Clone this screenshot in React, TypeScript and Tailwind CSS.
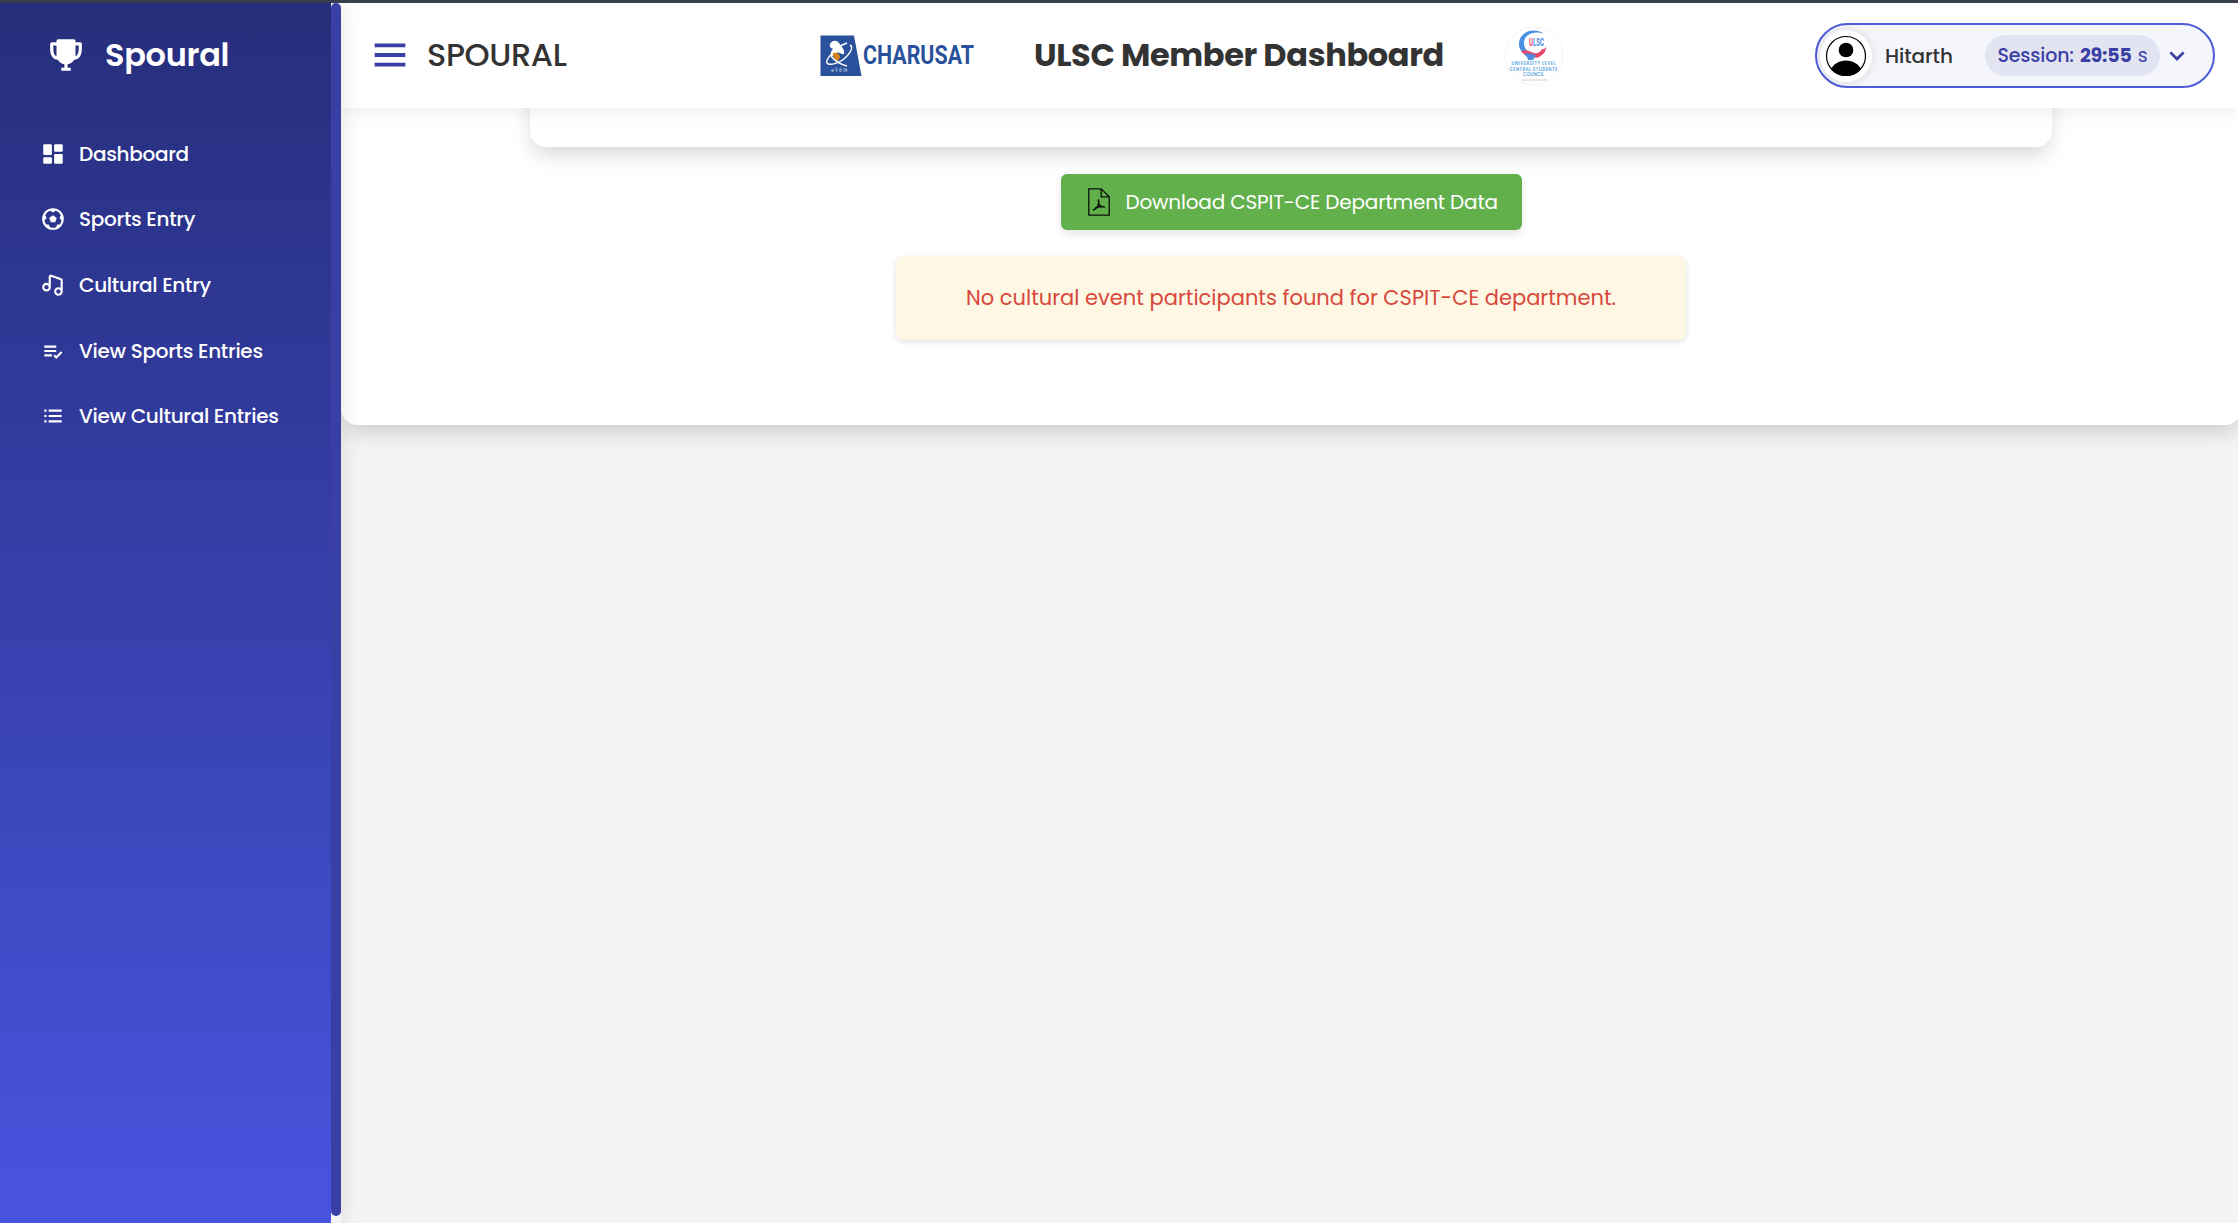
import type { ComponentType } from 'react';
import {
  BiChevronDown,
  BiFootball,
  BiListCheck,
  BiListUl,
  BiMenu,
  BiMusic,
  BiSolidDashboard,
  BiSolidTrophy,
} from 'react-icons/bi';

type NavItem = { label: string; Icon: ComponentType<{ className?: string }> };

const navItems: NavItem[] = [
  { label: 'Dashboard', Icon: BiSolidDashboard },
  { label: 'Sports Entry', Icon: BiFootball },
  { label: 'Cultural Entry', Icon: BiMusic },
  { label: 'View Sports Entries', Icon: BiListCheck },
  { label: 'View Cultural Entries', Icon: BiListUl },
];

function CharusatLogo() {
  return (
    <svg className="block h-[42px] w-[160px] shrink-0" viewBox="0 0 160 42">
      <path d="M.5.5H34L41.5 41H.5z" fill="#2a529c" />
      <path d="M10 9c2-4 7-4 9-1 3 4 6 7 5 11-3 1-5-3-8-1-2 1-3 4-5 3-1-3 0-5 2-7-2-1-4-2-3-5z" fill="#fff" />
      <path d="M13 18c3-1 6 0 7 3 0 3-1 4-3 5-2-2-5-5-4-8z" fill="#d9821c" />
      <path
        d="M30 10c4 2 0 9-6 14-5 4-12 6-16 5-3-2 0-7 5-11M11 21c3 4 8 8 16 10M20 11l7-3"
        fill="none"
        stroke="#fff"
        strokeWidth="1.4"
      />
      <text x="11" y="37" fontFamily="Noto Sans" fontSize="4.5" fill="#dfe6f3" textLength="16">
        चरैवेति
      </text>
      <text
        x="43"
        y="29.3"
        fontFamily="Roboto"
        fontWeight="700"
        fontSize="25"
        fill="#2a529c"
        textLength="111"
        lengthAdjust="spacingAndGlyphs"
      >
        CHARUSAT
      </text>
    </svg>
  );
}

function UlscLogo() {
  return (
    <svg className="block h-[60px] w-[60px] shrink-0" viewBox="0 0 60 60">
      <circle cx="30" cy="30" r="29" fill="#fff" stroke="#f1f1f1" strokeWidth=".8" />
      <path d="M40 8C31 1 15 5 15 18c0 6 4 9 8 13l6 2 2-6c-6 0-11-3-11-10C20 8 31 4 40 8z" fill="#4a90e2" />
      <path d="M17 25c5-2 9 0 12 2 4 1 8-1 9-4 2 1 4-1 4-3 1 5-3 9-7 11-5 2-7-1-10-2-3 0-6-1-8-4z" fill="#e8476a" />
      <path d="M22 27l10 2-3 5h-5z" fill="#4a90e2" />
      <text x="25" y="19.5" fontFamily="Roboto" fontWeight="700" fontSize="11" textLength="15" lengthAdjust="spacingAndGlyphs">
        <tspan fill="#e8476a">U</tspan>
        <tspan fill="#4a90e2">LSC</tspan>
      </text>
      <g fontFamily="Poppins" fontWeight="600" fontSize="4.4" fill="#5fa6e0" textAnchor="middle">
        <text x="29.5" y="39" textLength="44">UNIVERSITY LEVEL</text>
        <text x="29.5" y="44.6" textLength="48">CENTRAL STUDENTS</text>
        <text x="29.5" y="50.3" textLength="21">COUNCIL</text>
      </g>
      <path d="M18 54h25" stroke="#c9b5bb" strokeWidth="1" strokeDasharray="2 .7" />
    </svg>
  );
}

function PdfIcon() {
  return (
    <svg className="block h-7 w-[22px] shrink-0" viewBox="0 0 22 28" fill="none" stroke="#0b0f0a" strokeWidth="1.3">
      <path d="M.8.8h12.400l8 8v18.400H.8zM13.200.8v8h8" />
      <path
        d="M10.400 12c.8 2.500.6 4.500-.8 6.500s-2.600 3-4.100 3.500M10.600 16c1 1.800 3 2.800 5.800 2.900M7.500 20c2.600-1.400 5-1.600 8.500-1.200"
        strokeWidth="1.500"
        strokeLinecap="round"
      />
    </svg>
  );
}

function Avatar() {
  return (
    <span className="flex size-[52px] shrink-0 items-center justify-center rounded-full bg-white shadow-[0_0_10px_rgba(0,0,0,0.12)]">
      <svg className="size-[42px]" viewBox="0 0 42 42">
        <clipPath id="avatar-clip">
          <circle cx="21" cy="21" r="20" />
        </clipPath>
        <circle cx="21" cy="21" r="19.5" fill="#fff" stroke="#000" strokeWidth="1.2" />
        <g clipPath="url(#avatar-clip)">
          <circle cx="21" cy="15" r="7.3" />
          <path d="M5 36c3-7 9-10.500 16-10.500S34 29 37 36v6H5z" />
        </g>
      </svg>
    </span>
  );
}

function Sidebar() {
  return (
    <aside className="relative z-20 flex w-[341px] shrink-0 bg-[#f4f4f4] shadow-[0_0_20px_rgba(0,0,0,0.12)]">
      <div className="flex w-[331px] flex-col bg-linear-to-b from-[#262e7b] to-[#4854e0] text-white">
        <div className="flex h-[105px] items-center gap-5 pb-0.5 pl-[47px]">
          <BiSolidTrophy className="size-[38px]" />
          <span className="text-[32px] leading-none font-semibold tracking-[-0.3px]">Spoural</span>
        </div>
        <nav className="mt-[13px] flex flex-col">
          {navItems.map(({ label, Icon }) => (
            <a key={label} className="flex h-[65.6px] items-center gap-[13px] pl-10">
              <Icon className="size-[26px]" />
              <span className="text-[20px] leading-none font-medium tracking-[-0.3px]">{label}</span>
            </a>
          ))}
        </nav>
      </div>
      <div className="mb-[7px] w-[10px] rounded-full bg-[#3a3fa5]" />
    </aside>
  );
}

function Header() {
  return (
    <header className="relative z-10 flex h-[105px] shrink-0 items-center bg-white pr-[23px] pl-[26px] shadow-[0_2px_20px_rgba(0,0,0,0.08)]">
      <BiMenu className="mb-0.5 size-[46px] text-[#3a3fa5]" />
      <span className="mb-0.5 ml-3.5 w-[393px] text-[32px] leading-none font-medium tracking-[-0.4px] text-[#333]">
        SPOURAL
      </span>
      <CharusatLogo />
      <h1 className="mb-0.5 ml-[54px] w-[470px] text-[32px] leading-none font-bold tracking-[-0.35px] text-[#333]">
        ULSC Member Dashboard
      </h1>
      <UlscLogo />
      <button className="ml-auto flex h-[65px] w-[400px] items-center rounded-full border-2 border-[#4f5bd9] bg-[#f5f6fb] pl-[3px]">
        <Avatar />
        <span className="ml-[13px] w-[100px] text-left text-[20px] leading-none font-medium tracking-[-0.1px] text-[#333]">
          Hitarth
        </span>
        <span className="flex h-[41px] w-[175px] items-center justify-center gap-1.5 rounded-full bg-[#e2e4f1] text-[19px] leading-none tracking-[-0.15px] text-[#3a3fa5]">
          <span className="font-medium">Session:</span>
          <span className="font-bold">29:55</span>
          <span>s</span>
        </span>
        <BiChevronDown className="mb-0.5 ml-px size-[32px] text-[#3a3fa5]" />
      </button>
    </header>
  );
}

export default function App() {
  return (
    <div className="flex h-screen flex-col overflow-hidden bg-[#f4f4f4] font-[Poppins,sans-serif]">
      <div className="h-[3px] shrink-0 bg-[#3b4252]" />
      <div className="flex min-h-0 flex-1">
        <Sidebar />
        <div className="flex min-w-0 flex-1 flex-col">
          <Header />
          <main className="flex-1 overflow-hidden">
            <section className="-mr-[3px] flex h-[317px] flex-col items-center rounded-b-2xl bg-white shadow-[0_10px_22px_-4px_rgba(0,0,0,0.18)]">
              <div className="-mt-10 h-[79px] w-[1522px] shrink-0 rounded-2xl bg-white shadow-[0_10px_22px_-4px_rgba(0,0,0,0.18)]" />
              <button className="mt-[27px] flex h-14 w-[461px] shrink-0 items-center rounded-md bg-[#62b04c] pl-[27px] text-[20px] leading-none tracking-[-0.17px] text-white shadow-[0_4px_8px_rgba(0,0,0,0.1)]">
                <PdfIcon />
                <span className="ml-4">Download CSPIT-CE Department Data</span>
              </button>
              <p className="mt-[26px] flex h-[84px] w-[790px] shrink-0 items-center justify-center rounded-lg bg-[#fdf7e4] pb-0.5 text-[21px] leading-none text-[#d9483b] shadow-[0_2px_6px_rgba(0,0,0,0.12)]">
                No cultural event participants found for CSPIT-CE department.
              </p>
            </section>
          </main>
        </div>
      </div>
    </div>
  );
}
